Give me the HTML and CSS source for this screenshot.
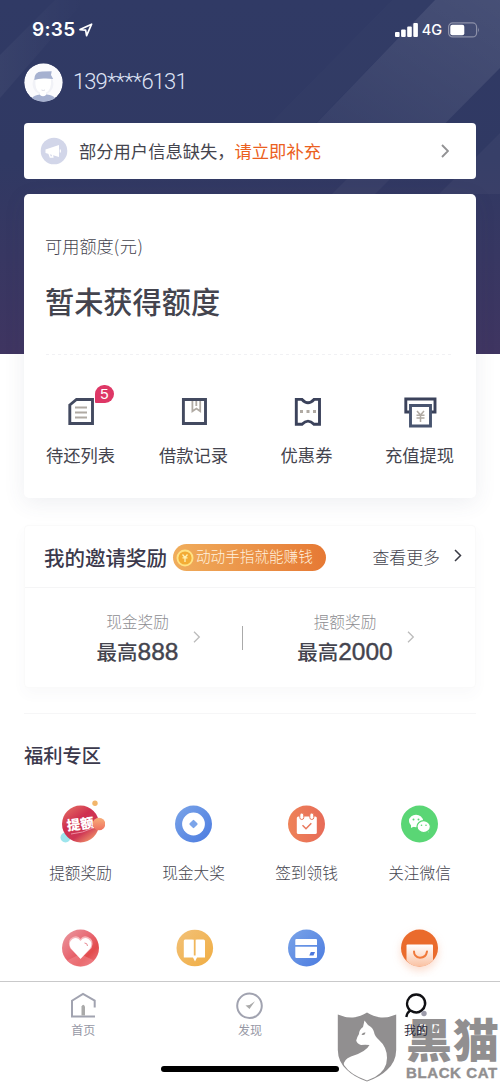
FILE: index.html
```
<!DOCTYPE html>
<html lang="zh-CN">
<head>
<meta charset="utf-8">
<title>我的</title>
<link rel="stylesheet" href="styles.css">
</head>
<body>
<div class="screen">
  <svg class="stripes" width="500" height="354" viewBox="0 0 500 354">
    <defs>
      <linearGradient id="beam" x1="1" y1="0" x2="0.2" y2="1"><stop offset="0" stop-color="#fff" stop-opacity=".11"/><stop offset="1" stop-color="#fff" stop-opacity=".02"/></linearGradient>
      <linearGradient id="faint" x1="0" y1="0" x2="1" y2="0"><stop offset="0" stop-color="#fff" stop-opacity=".04"/><stop offset="1" stop-color="#fff" stop-opacity="0"/></linearGradient>
    </defs>
    <path d="M435 0H500V68L390 179H263Z" fill="url(#beam)"/>
    <path d="M392 0H435L300 139H255Z" fill="#fff" opacity=".012"/>
    <path d="M332 194L347 179H390L375 194ZM500 133V194H439Z" fill="#fff" opacity=".035"/>
    <path d="M0 55L55 0H85L0 98Z" fill="url(#faint)"/>
  </svg>

  <div class="status">
    <span class="clock">9:35</span>
    <svg class="loc" width="14" height="14" viewBox="0 0 14 14"><path d="M1 6.6L12.6 1.2L7.6 12.7L6.6 7.2Z" fill="none" stroke="#fff" stroke-width="1.7" stroke-linejoin="round"/></svg>
    <span class="spacer"></span>
    <svg width="23" height="14" viewBox="0 0 23 14" fill="#fff"><rect y="9" width="4.6" height="5" rx="1"/><rect x="6.1" y="6.4" width="4.6" height="7.6" rx="1"/><rect x="12.2" y="3.5" width="4.6" height="10.5" rx="1"/><rect x="18.3" width="4.6" height="14" rx="1"/></svg>
    <span class="net">4G</span>
    <svg width="32" height="16" viewBox="0 0 32 16"><rect x=".6" y=".9" width="28" height="14" rx="4" fill="none" stroke="#8c90a8" stroke-width="1.2"/><rect x="2.3" y="2.7" width="14" height="10.6" rx="2" fill="#fff"/><path d="M30 5.5q1.8 2.4 0 5z" fill="#8c90a8"/></svg>
  </div>

  <div class="profile">
    <svg width="39" height="39" viewBox="0 0 39 39"><defs><clipPath id="face"><circle cx="19.5" cy="19.5" r="19.3"/></clipPath></defs><g clip-path="url(#face)"><circle cx="19.5" cy="19.5" r="19.3" fill="#fbfbfd"/><circle cx="19" cy="21" r="10.500" fill="#f1f2f7"/><path d="M8 39V35Q10 32 16 31.500H23Q29 32 31 35V39Z" fill="#a6b1d0"/><path d="M16 26H22V32Q19 34.500 16 32Z" fill="#fff"/><path d="M11.400 14H27V21Q26 30 19 30Q12 30 11.400 21Z" fill="#fff"/><path d="M10.300 17Q10 8.500 18 8.500L27.700 8.300L27 12L29.200 16Q25 15.500 22 15.500Q15 15 10.300 17Z" fill="#a6b1d0"/><path d="M17.500 27q1.700 1 3.500 0" stroke="#d9dbe3" fill="none"/></g></svg>
    <span class="phone">139<span class="mask">****</span>6131</span>
  </div>

  <div class="notice">
    <svg width="28" height="28" viewBox="0 0 28 28"><circle cx="14" cy="14" r="13.300" fill="#d2d6e9"/><path d="M5.500 12.500L19 8V20L5.500 16Z" fill="#fff"/><path d="M9 16.500L10.300 20H12.800L12.300 17.500" fill="none" stroke="#fff" stroke-width="1.400"/><path d="M20.300 12.500v3" stroke="#fff" stroke-width="1.200"/></svg>
    <span class="notice-text">部分用户信息缺失，<em>请立即补充</em></span>
    <svg class="chev" width="8" height="14" viewBox="0 0 8 14"><path d="M1 1L7 7L1 13" fill="none" stroke="#929294" stroke-width="1.900"/></svg>
  </div>

  <section class="quota">
    <div class="quota-label">可用额度<span class="unit">(元)</span></div>
    <div class="quota-value">暂未获得额度</div>
    <div class="actions">
      <div class="action">
        <span class="badge">5</span>
        <svg width="34" height="34" viewBox="0 0 34 34"><path d="M5.800 11L12.500 5.500H28.500V29.500H5.800Z" fill="none" stroke="#434a60" stroke-width="2.900"/><path d="M11 13.400H23M11 18.400H23M11 23.500H23" stroke="#b0aaa3" stroke-width="2"/></svg>
        <span>待还列表</span>
      </div>
      <div class="action">
        <svg width="34" height="34" viewBox="0 0 34 34"><path d="M6.400 5.500H28.500V29.500H6.400Z" fill="none" stroke="#434a60" stroke-width="2.900"/><path d="M15.400 7V17.200L19.400 14.500L23.200 17.200V7M19.300 7V12" fill="none" stroke="#b0aaa3" stroke-width="1.800"/></svg>
        <span>借款记录</span>
      </div>
      <div class="action">
        <svg width="34" height="34" viewBox="0 0 34 34"><path d="M6.300 5.400H12Q18 12 24 5.400H29.500V30.300H24Q18 24 12 30.300H6.300Z" fill="none" stroke="#3b425b" stroke-width="2.900"/><path d="M10 17.600H13M16.500 17.600H19.500M23 17.600H26" stroke="#b0aaa3" stroke-width="3"/></svg>
        <span>优惠券</span>
      </div>
      <div class="action">
        <svg width="34" height="34" viewBox="0 0 34 34"><path d="M7.500 18H2.800V5H32V18H28" fill="none" stroke="#3b425b" stroke-width="2.900"/><path d="M7.500 11.500H27.500V32H7.500Z" fill="#fff" stroke="#48546f" stroke-width="2.900"/><path d="M14 17L17.500 21L21 17M13.500 21.200H21.500M13.500 24H21.500M17.500 21V28" fill="none" stroke="#b0aaa3" stroke-width="1.500"/></svg>
        <span>充值提现</span>
      </div>
    </div>
  </section>

  <section class="invite">
    <div class="invite-head">
      <h2>我的邀请奖励</h2>
      <div class="pill">
        <svg width="18" height="18" viewBox="0 0 18 18"><circle cx="9" cy="9" r="8.500" fill="#ffe283"/><circle cx="9" cy="9" r="6.600" fill="#f3ac35"/><path d="M6.500 5.500L9 8.500L11.500 5.500M6.500 8.800H11.500M9 8.500V13" fill="none" stroke="#fff2b5" stroke-width="1.300"/></svg>
        <span>动动手指就能赚钱</span>
      </div>
      <span class="more">查看更多</span>
      <svg class="more-arrow" width="8" height="13" viewBox="0 0 8 13"><path d="M1 1L6.500 6.500L1 12" fill="none" stroke="#3a3b45" stroke-width="1.500"/></svg>
    </div>
    <div class="rewards">
      <div class="reward cash"><span class="name">现金奖励</span><span class="amount">最高<b>888</b></span></div>
      <svg class="arrow" width="8" height="12" viewBox="0 0 8 12"><path d="M1 .8L6.300 6L1 11.200" fill="none" stroke="#bbb" stroke-width="1.300"/></svg>
      <i class="bar"></i>
      <div class="reward lift"><span class="name">提额奖励</span><span class="amount">最高<b>2000</b></span></div>
      <svg class="arrow" width="8" height="12" viewBox="0 0 8 12"><path d="M1 .8L6.300 6L1 11.200" fill="none" stroke="#bbb" stroke-width="1.300"/></svg>
    </div>
  </section>

  <section class="welfare">
    <h2>福利专区</h2>
    <div class="grid">
      <div class="item">
        <svg width="50" height="50" viewBox="0 0 50 50">
          <defs><linearGradient id="red" x1="0" y1="0" x2=".7" y2="1"><stop stop-color="#e87866"/><stop offset=".45" stop-color="#cf304f"/><stop offset=".75" stop-color="#ce3654"/><stop offset="1" stop-color="#ee8c68"/></linearGradient><linearGradient id="peach" x1="0" y1="0" x2="0" y2="1"><stop stop-color="#f8ae79"/><stop offset="1" stop-color="#ee7060"/></linearGradient></defs>
          <circle cx="10.500" cy="38.500" r="5" fill="#9de5ed"/><circle cx="25.500" cy="25" r="18.500" fill="url(#red)"/><circle cx="40" cy="4.300" r="2.700" fill="#f2b66b"/>
          <text class="seal" x="11.800" y="30" transform="rotate(-8 25 25)">提额</text><path d="M16 35Q28 34 38 29" stroke="#ed8da0" fill="none"/>
          <circle cx="44" cy="25" r="6.300" fill="url(#peach)"/></svg>
        <span>提额奖励</span>
      </div>
      <div class="item">
        <svg width="50" height="50" viewBox="0 0 50 50"><defs><linearGradient id="blue" x1="0" y1="0" x2="1" y2="1"><stop stop-color="#7aa4e8"/><stop offset="1" stop-color="#4b7be0"/></linearGradient></defs><circle cx="25.500" cy="25" r="18.500" fill="url(#blue)"/><circle cx="25.500" cy="25" r="11.400" fill="#fff"/><rect x="22.300" y="21.800" width="6.400" height="6.400" rx="1" transform="rotate(45 25.500 25)" fill="#7ba4ea"/></svg>
        <span>现金大奖</span>
      </div>
      <div class="item">
        <svg width="50" height="50" viewBox="0 0 50 50"><defs><linearGradient id="coral"><stop stop-color="#ee8258"/><stop offset="1" stop-color="#e76b58"/></linearGradient></defs><circle cx="25.500" cy="25" r="18.500" fill="url(#coral)"/><rect x="15.800" y="17.500" width="20" height="17.500" rx="1.500" fill="#fff"/><rect x="18.800" y="14" width="4" height="6.500" rx="2" fill="#fff" stroke="#ea795b"/><rect x="28.800" y="14" width="4" height="6.500" rx="2" fill="#fff" stroke="#ea795b"/><path d="M21.500 26.200L25 29.700L30.300 24.200" fill="none" stroke="#e9785d" stroke-width="1.500"/></svg>
        <span>签到领钱</span>
      </div>
      <div class="item">
        <svg width="50" height="50" viewBox="0 0 50 50"><circle cx="25.500" cy="25" r="18.500" fill="#5ad675"/><path d="M17 25L17 29L21 27Z" fill="#fff"/><ellipse cx="22" cy="22" rx="7" ry="6.200" fill="#fff"/><path d="M31 31L34.500 33.500L34 29Z" fill="#fff"/><ellipse cx="29.700" cy="27.600" rx="6.700" ry="5.900" fill="#fff" stroke="#5ad675" stroke-width="1.200"/><g fill="#5ad675"><circle cx="19.500" cy="20.500" r="1"/><circle cx="24.500" cy="20.500" r="1"/><circle cx="27.500" cy="26.300" r=".8"/><circle cx="32" cy="26.300" r=".8"/></g></svg>
        <span>关注微信</span>
      </div>
      <div class="item">
        <svg width="50" height="50" viewBox="0 0 50 50"><defs><linearGradient id="rose" x1="0" y1="0" x2="1" y2="1"><stop stop-color="#ea9ca2"/><stop offset=".45" stop-color="#e86873"/><stop offset=".7" stop-color="#e24b4c"/><stop offset="1" stop-color="#ed7d88"/></linearGradient></defs><circle cx="25.500" cy="25" r="18.500" fill="url(#rose)"/><path d="M12 37.500L25.500 31L39 37.500Q34 43.500 25.500 43.500Q17 43.500 12 37.500Z" fill="#f3949c" opacity=".45"/><path d="M25.500 36L15 25Q11.500 17 18 14Q23 12 25.500 16Q28 12 33 14Q40 17 36.500 25Z" fill="#f6b4b9"/><path d="M25.500 35.700L16 25.500Q12.500 19.500 17.500 16Q22.500 13.500 25.500 18Q28.500 13.500 33.500 16Q38.500 19.500 35 25.500Z" fill="#fff"/><path d="M29.500 20Q32.500 20 32.500 23" fill="none" stroke="#e78a93"/></svg>
      </div>
      <div class="item">
        <svg width="50" height="50" viewBox="0 0 50 50"><defs><linearGradient id="gold" x1="0" y1="0" x2="1" y2="1"><stop stop-color="#f2c178"/><stop offset="1" stop-color="#f0ad42"/></linearGradient></defs><circle cx="26.800" cy="25" r="18.300" fill="url(#gold)"/><path d="M17 16.500H24Q26 16.500 26.800 17.500Q27.600 16.500 29 16.500H35.500Q37 16.500 37 18V34.500H29L27 38.500L25 34.500H15.800V18Q15.800 16.500 17 16.500Z" fill="#fff"/><path d="M26.700 17V32.500" stroke="#f0b65b" stroke-width="1.800"/></svg>
      </div>
      <div class="item">
        <svg width="50" height="50" viewBox="0 0 50 50"><circle cx="25.500" cy="25" r="18.500" fill="url(#blue)"/><path d="M15.300 16H35Q36 16 36 17V22H14.300V17Q14.300 16 15.300 16ZM14.300 23.700H36V34Q36 35 35 35H15.300Q14.300 35 14.300 34Z" fill="#fff"/><path d="M29.800 29H34L32.500 32.500H28.300Z" fill="#4c78de"/></svg>
      </div>
      <div class="item">
        <svg class="glow" width="50" height="50" viewBox="0 0 50 50"><defs><linearGradient id="bag" x1="0" y1="0" x2="0" y2="1"><stop stop-color="#fff"/><stop offset="1" stop-color="#fac1a2"/></linearGradient></defs><circle cx="25.500" cy="25" r="18.500" fill="#ea6b2c"/><path d="M12.500 22.500Q12.500 21.500 13.500 21.500H38Q39 21.500 39 22.500V37.500Q34 43.500 25.500 43.500Q17 43.500 12.500 37.500Z" fill="url(#bag)"/><path d="M20 28.500Q20 34 26 34.700Q32 34.700 33 28.500" fill="none" stroke="#f0793a" stroke-width="2" stroke-linecap="round"/></svg>
      </div>
    </div>
  </section>

  <nav class="tabs">
    <div class="tab">
      <svg width="28" height="28" viewBox="0 0 28 28"><path d="M25.700 15.500V8.700L14 2L3 8.700V24.500H26" fill="none" stroke="#a1a3b0" stroke-width="2"/><path d="M12.500 23.500V14.500Q14.300 11 16 14.500V23.500Z" fill="#aaa"/></svg>
      <span>首页</span>
    </div>
    <div class="tab">
      <svg width="28" height="28" viewBox="0 0 28 28"><circle cx="13.500" cy="13.800" r="12.300" fill="none" stroke="#a1a3b0" stroke-width="2"/><path d="M19 9.200L13.500 17L9.500 13.500L13.500 13Z" fill="#aaa"/></svg>
      <span>发现</span>
    </div>
  </nav>
  <div class="home-bar"></div>

  <div class="watermark">
    <svg width="60" height="70" viewBox="0 0 60 70"><path d="M.8 2.500Q9 6 16 5.500Q24 4.500 30 .5Q36 4.500 44 5.500Q51 6 59.200 2.500V38Q59 50 50 58Q43 65 30 69.500Q17 65 10 58Q1 50 .8 38Z" fill="#918f90"/><path d="M27.500 8.500L31 13Q36 15.500 37 20Q37.500 24 42 28Q50 35 50 46Q50 58 38 65L30 68.500Q13 62.500 7 53Q6 48 14 44.500Q29 40 32.500 33Q28 32.500 24 33Q20 31.500 19.200 28.500Q20 25 22 22Q22 18 26 15Z" fill="#fff"/><path d="M24.500 22.500Q26 20 28.500 20.500Q28 23.500 25.500 23Z" fill="#918f90"/></svg>
    <div class="brand"><span class="brand-cn">黑猫</span><span class="brand-en">BLACK CAT</span></div>
  </div>

  <div class="tab active">
    <svg width="28" height="28" viewBox="0 0 28 28"><path d="M4.300 25Q5 20.500 8.300 18.500C3.700 14 4.500 9 7.500 5.500C11 1.500 17.500 1.500 21 5.500C24.500 9.800 23.500 15.500 19.500 18.500C16.500 21 12 20.700 8.500 18.500" fill="none" stroke="#101014" stroke-width="2.400"/><circle cx="22" cy="21.500" r="2.700" fill="#9c9ba9"/></svg>
    <span>我的</span>
  </div>
</div>
</body>
</html>
```
FILE: styles.css
```
* { box-sizing: border-box; }
body { margin: 0; background: #fff; font-family: "Noto Sans CJK SC", sans-serif; color: #44444e; }
svg { display: block; flex: none; }
h2 { margin: 0; font-weight: 500; color: #3b394c; }

.screen {
  position: relative;
  width: 500px;
  height: 1082px;
  overflow: hidden;
  display: flex;
  flex-direction: column;
  background: linear-gradient(#303a65, #303963 45%, #3f3561) top / 100% 354px no-repeat #fff;
}
.stripes { position: absolute; top: 0; left: 0; }
.status, .profile, .notice, .quota { position: relative; }

.status { height: 60px; padding: 0 20px 0 32px; display: flex; align-items: center; color: #fff; }
.clock { font: 600 19px/24px Inter, sans-serif; letter-spacing: .3px; }
.loc { margin-left: 4px; }
.spacer { flex: 1; }
.net { font: 500 14.5px/20px Inter, sans-serif; margin: 0 6px 0 4px; }

.profile { height: 44px; padding: 0 24px; display: flex; align-items: center; gap: 10px; }
.phone { font: 300 22px/28px Roboto, sans-serif; color: #dfe3f5; letter-spacing: -.9px; }
.mask { letter-spacing: -.7px; }

.notice { height: 56px; margin: 19px 24px 0; padding: 0 27px 0 16px; display: flex; align-items: center; background: #fff; border-radius: 4px; }
.notice-text { margin: -1px 0 0 11px; font-size: 17.3px; line-height: 26px; white-space: nowrap; flex: 1; }
.notice-text em { font-style: normal; color: #eb6020; }

.quota { height: 304px; margin: 15px 24px 0; padding: 38px 21px 0; background: #fff; border-radius: 5px; box-shadow: 0 5px 22px rgba(70, 75, 110, .09); }
.quota-label { font-size: 17.2px; line-height: 28px; font-weight: 300; }
.unit { letter-spacing: .6px; }
.quota-value { margin-top: 18px; font-size: 29.2px; line-height: 44px; font-weight: 500; }
.actions { margin: 32px -23px 0 -21px; padding-top: 40px; display: grid; grid-template-columns: repeat(4, 113px); background: repeating-linear-gradient(90deg, #f1f1f4 0 3px, transparent 3px 6px) 22px 0 / 408px 1px no-repeat; }
.action { position: relative; display: flex; flex-direction: column; align-items: center; font-size: 17.3px; line-height: 26px; gap: 14px; }
.badge { position: absolute; left: 71px; top: -9px; width: 19px; height: 18px; border-radius: 9px 9px 9px 1px; background: #de3766; color: #fff; font: 15px/18px "Liberation Sans", sans-serif; text-align: center; }

.invite { height: 163px; margin: 27px 24px 0; flex: none; border: 1px solid #fafafa; border-radius: 4px; box-shadow: 0 6px 14px rgba(80, 80, 110, .035); }
.invite-head { height: 62px; padding: 0 13px 0 19px; display: flex; align-items: center; border-bottom: 1px solid #f5f5f6; }
.invite-head h2 { font-size: 20.5px; line-height: 30px; white-space: nowrap; }
.pill { width: 153px; height: 27px; margin: 2px 0 0 6px; padding-left: 3px; display: flex; align-items: center; gap: 2px; border-radius: 14px; background: linear-gradient(90deg, #f0ad5c, #e67934); color: #fff1df; font-size: 14.6px; font-weight: 300; line-height: 24px; white-space: nowrap; }
.pill span { margin-top: -3px; }
.more { margin-left: auto; margin-right: 14px; font-size: 16.9px; font-weight: 300; line-height: 26px; }
.more-arrow { margin-top: -2px; }
.rewards { height: 99px; display: flex; align-items: center; }
.reward { display: flex; flex-direction: column; align-items: center; white-space: nowrap; padding-top: 3px; }
.cash { width: 85px; margin-left: 70px; }
.lift { width: 98px; margin-left: 53px; }
.name { font-size: 15.7px; line-height: 24px; font-weight: 300; color: #8d8d91; }
.amount { font-size: 20.5px; line-height: 34px; font-weight: 500; }
.amount b { font: 500 24.5px/30px "Liberation Sans", sans-serif; -webkit-text-stroke: .4px currentColor; }
.arrow { margin: -2px 0 0 13px; }
.bar { width: 1px; height: 24px; margin-left: 41px; background: #aaa; }

.welfare { margin: 25px 24px 0; padding-top: 26px; border-top: 1px solid #f6f6f7; flex: none; }
.welfare h2 { font-size: 19.3px; line-height: 30px; }
.grid { margin: 29px 0 0 0; display: grid; grid-template-columns: repeat(4, 113px); grid-auto-rows: 124px; height: 178px; overflow: hidden; }
.item { display: flex; flex-direction: column; align-items: center; gap: 11px; font-size: 15.7px; line-height: 25px; font-weight: 300; }
.item svg { margin-left: -1px; }
.seal { fill: #fff; font-size: 13.5px; font-weight: 900; }
.glow { filter: drop-shadow(0 4px 4px rgba(240, 130, 80, .28)); }

.tabs { position: absolute; left: 0; right: 0; bottom: 0; height: 101px; padding-top: 10px; display: grid; grid-template-columns: repeat(3, 1fr); background: #fff; border-top: 1px solid #c9c9ca; }
.tab { display: flex; flex-direction: column; align-items: center; gap: 0; font-size: 12px; line-height: 19px; color: #9698a5; }
.active { position: absolute; left: 333px; bottom: 0; width: 166px; height: 90px; color: #28283a; }
.home-bar { position: absolute; left: 161px; bottom: 10px; width: 178px; height: 6px; border-radius: 3px; background: #000; }
.watermark { position: absolute; left: 337px; bottom: 0; width: 163px; height: 70px; display: flex; gap: 9px; color: #918f90; }
.brand { display: flex; flex-direction: column; white-space: nowrap; }
.brand-cn { font-size: 46px; line-height: 51px; font-weight: 900; height: 53px; letter-spacing: 1px; }
.brand-en { font: 700 15px/16px "Liberation Sans", sans-serif; letter-spacing: .6px; -webkit-text-stroke: .4px currentColor; }
```
